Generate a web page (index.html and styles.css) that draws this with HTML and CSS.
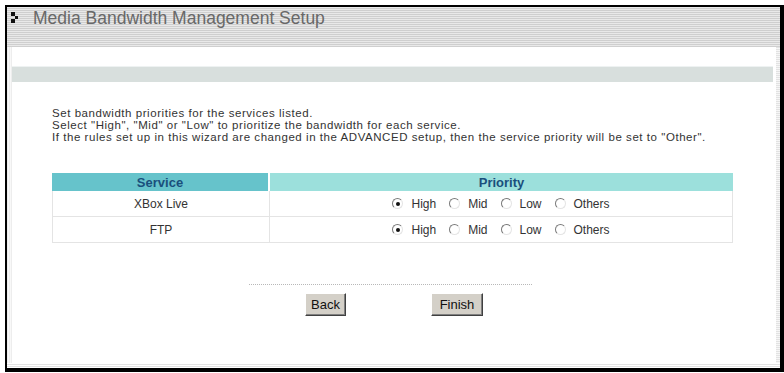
FILE: index.html
```html
<!DOCTYPE html>
<html>
<head>
<meta charset="utf-8">
<link rel="stylesheet" href="styles.css">
</head>
<body>
<div class="frame">
  <div class="titlebar">
    <svg class="ticon" width="8" height="12" viewBox="0 0 8 12"><rect x="0" y="0" width="4" height="4" fill="#111"/><rect x="4" y="4" width="3" height="3" fill="#111"/><rect x="0" y="7" width="4" height="4" fill="#111"/></svg>
    <span class="title">Media Bandwidth Management Setup</span>
  </div>
  <div class="body">
    <div class="strip-left"></div>
    <div class="main">
      <div class="spacer"></div>
      <div class="graybar"></div>
      <div class="content">
        <div class="intro">
          <div>Set bandwidth priorities for the services listed.</div>
          <div>Select "High", "Mid" or "Low" to prioritize the bandwidth for each service.</div>
          <div>If the rules set up in this wizard are changed in the ADVANCED setup, then the service priority will be set to "Other".</div>
        </div>
        <table class="svc">
          <tr>
            <th class="h-service">Service</th>
            <th class="h-priority">Priority</th>
          </tr>
          <tr>
            <td class="c-service">XBox Live</td>
            <td class="c-priority">
              <span class="opt"><span class="radio on"></span><span class="lbl">High</span></span><span class="opt"><span class="radio"></span><span class="lbl">Mid</span></span><span class="opt"><span class="radio"></span><span class="lbl">Low</span></span><span class="opt"><span class="radio"></span><span class="lbl">Others</span></span>
            </td>
          </tr>
          <tr>
            <td class="c-service">FTP</td>
            <td class="c-priority">
              <span class="opt"><span class="radio on"></span><span class="lbl">High</span></span><span class="opt"><span class="radio"></span><span class="lbl">Mid</span></span><span class="opt"><span class="radio"></span><span class="lbl">Low</span></span><span class="opt"><span class="radio"></span><span class="lbl">Others</span></span>
            </td>
          </tr>
        </table>
        <div class="divider"></div>
        <div class="buttons">
          <button class="btn btn-back">Back</button>
          <button class="btn btn-finish">Finish</button>
        </div>
      </div>
    </div>
    <div class="strip-right"></div>
  </div>
  <div class="bottomline"></div>
</div>
</body>
</html>
```
FILE: styles.css
```css
html, body {
  margin: 0;
  padding: 0;
  background: #fff;
}
body {
  font-family: "Liberation Sans", Arial, sans-serif;
  color: #333;
  width: 784px;
  height: 373px;
  overflow: hidden;
}
.frame {
  margin: 5px 0 0 5px;
  width: 779px;
  height: 367px;
  box-sizing: border-box;
  border-style: solid;
  border-color: #000;
  border-width: 2px 4px 4px 2px;
  display: flex;
  flex-direction: column;
}
.titlebar {
  height: 40px;
  flex: none;
  display: flex;
  align-items: flex-start;
  background: repeating-linear-gradient(to bottom, #e9e9e9 0px, #e9e9e9 1px, #cfcfcf 1px, #cfcfcf 2px);
}
.ticon {
  margin: 5px 0 0 4px;
  flex: none;
}
.title {
  margin: 1px 0 0 14px;
  font-size: 17.5px;
  line-height: 20px;
  color: #686868;
}
.body {
  flex: 1;
  display: flex;
}
.strip-left {
  width: 5px;
  flex: none;
  background: repeating-linear-gradient(to right, #ededed 0px, #ededed 1px, #f8f8f8 1px, #f8f8f8 2px);
}
.strip-right {
  width: 4px;
  flex: none;
  background: repeating-linear-gradient(to bottom, #e2e2e2 0px, #e2e2e2 1px, #f6f6f6 1px, #f6f6f6 2px);
}
.main {
  flex: 1;
  display: flex;
  flex-direction: column;
}
.spacer {
  height: 19px;
}
.graybar {
  height: 16px;
  margin-right: 3px;
  background: #d8dfdd;
  border-top: 1px solid #eef2f2;
  box-sizing: border-box;
}
.content {
  padding-left: 40px;
}
.intro {
  margin-top: 25px;
  font-size: 11.5px;
  line-height: 12px;
  letter-spacing: 0.55px;
  color: #333;
}
.svc {
  margin-top: 30px;
  width: 681px;
  border-collapse: separate;
  border-spacing: 0;
  font-size: 12px;
  color: #333;
}
.svc th {
  height: 18px;
  padding: 0;
  font-size: 13px;
  font-weight: bold;
  color: #1a4f7c;
  text-align: center;
}
.h-service {
  width: 216px;
  background: #66c3cb;
  border-right: 2px solid #fff;
}
.h-priority {
  background: #9ce0dc;
}
.svc td {
  height: 25px;
  padding: 0;
  text-align: center;
  border-bottom: 1px solid #e4e4e4;
}
.c-service {
  border-left: 1px solid #e4e4e4;
  border-right: 1px solid #e4e4e4;
}
.c-priority {
  border-right: 1px solid #e4e4e4;
}
.opt {
  display: inline-flex;
  align-items: center;
  vertical-align: middle;
  margin-left: 13px;
}
.opt:first-child {
  margin-left: 0;
}
.radio {
  width: 11px;
  height: 11px;
  box-sizing: border-box;
  border-radius: 50%;
  background: #fff;
  border: 1px solid;
  border-color: #7a7a7a #e4e4e4 #e4e4e4 #7a7a7a;
  position: relative;
}
.radio.on::after {
  content: "";
  position: absolute;
  left: 2.5px;
  top: 2.5px;
  width: 4px;
  height: 4px;
  border-radius: 50%;
  background: #111;
}
.lbl {
  margin-left: 8px;
}
.divider {
  margin: 41px 0 0 197px;
  width: 283px;
  border-top: 1px dotted #b8b8b8;
}
.buttons {
  margin: 8px 0 0 253px;
  display: flex;
  gap: 85px;
}
.btn {
  height: 23px;
  padding: 0;
  font-family: "Liberation Sans", Arial, sans-serif;
  font-size: 13px;
  color: #111;
  background: #d4d0c8;
  border: 1px solid;
  border-color: #fff #404040 #404040 #fff;
  box-shadow: inset -1px -1px 0 #808080;
  box-sizing: border-box;
}
.btn-back {
  width: 41px;
}
.btn-finish {
  width: 52px;
}
.bottomline {
  height: 5px;
  flex: none;
  background: repeating-linear-gradient(to bottom, #fff 0px, #fff 1px, #e2e2e2 1px, #e2e2e2 2px);
}
```
